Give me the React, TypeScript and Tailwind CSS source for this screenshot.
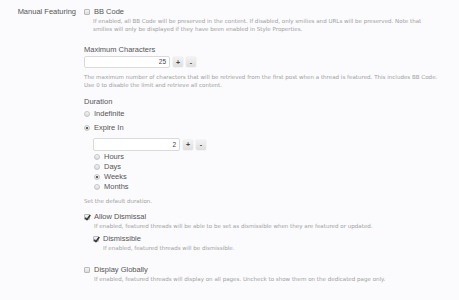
import React from "react";

const Check = ({ on = false }: { on?: boolean }) => (
  <span className="relative inline-block w-[6px] h-[6px] rounded-[1px] border border-[#b9b9b9] bg-gradient-to-b from-[#f4f4f4] to-[#dcdcdc] shrink-0">
    {on && (
      <svg viewBox="0 0 6 6" className="absolute -left-[1px] -top-[1.5px] w-[7px] h-[7px]">
        <path d="M1 3.2 L2.5 4.8 L5.4 0.8" fill="none" stroke="#333" strokeWidth="1.3" />
      </svg>
    )}
  </span>
);

const Radio = ({ on = false }: { on?: boolean }) => (
  <span className="relative inline-flex items-center justify-center w-[6px] h-[6px] rounded-full border border-[#c4c4c4] bg-gradient-to-b from-[#f6f6f6] to-[#dadada] shrink-0">
    {on && <span className="w-[2.5px] h-[2.5px] rounded-full bg-[#333]" />}
  </span>
);

const Btn = ({ children }: { children: React.ReactNode }) => (
  <span className="w-[10px] h-[10px] rounded-[2px] bg-gradient-to-b from-[#f3f3f3] to-[#dedede] shadow-[0_0_1px_#aaa] flex items-center justify-center text-[7px] leading-none font-bold text-[#444]">
    {children}
  </span>
);

const Spin = ({ value, width }: { value: string; width: string }) => (
  <div className="flex items-center gap-[3px] h-full">
    <div className={`${width} h-full bg-white border border-[#dadada] rounded-[2px] flex items-center justify-end pr-[3px] text-[6.5px] text-[#444]`}>
      {value}
    </div>
    <Btn>+</Btn>
    <Btn>-</Btn>
  </div>
);

const Desc = ({ children, className = "" }: { children: React.ReactNode; className?: string }) => (
  <p className={`font-['DejaVu_Sans',sans-serif] text-[5.55px] leading-[7.5px] text-[#a0a0a0] whitespace-nowrap ${className}`}>{children}</p>
);

const Opt = ({ children, className = "" }: { children: React.ReactNode; className?: string }) => (
  <div className={`flex items-center gap-[4px] text-[7.5px] text-[#555] ${className}`}>{children}</div>
);

export default function App() {
  return (
    <div className="w-[459px] h-[300px] bg-[#fbfbfd] overflow-hidden font-['Liberation_Sans',sans-serif]">
      <div className="flex pt-[7px]">
        <div className="w-[76px] h-[9px] flex items-center justify-end text-[7.5px] text-[#555]">Manual Featuring</div>
        <div className="ml-[8px] flex flex-col">
          <Opt className="h-[9px]">
            <Check />
            <span>BB Code</span>
          </Opt>
          <Desc className="ml-[9px] mt-[2px]">
            If enabled, all BB Code will be preserved in the content. If disabled, only smilies and URLs will be preserved. Note that
            <br />
            smilies will only be displayed if they have been enabled in Style Properties.
          </Desc>

          <div className="mt-[13px] h-[8px] leading-[8px] text-[7.5px] text-[#555]">Maximum Characters</div>
          <div className="mt-[2px] h-[12px]">
            <Spin value="25" width="w-[86px]" />
          </div>
          <Desc className="mt-[6px]">
            The maximum number of characters that will be retrieved from the first post when a thread is featured. This includes BB Code.
            <br />
            Use 0 to disable the limit and retrieve all content.
          </Desc>

          <div className="mt-[9px] h-[8px] leading-[8px] text-[7.5px] text-[#555]">Duration</div>
          <Opt className="mt-[4px] h-[8px]">
            <Radio />
            <span>Indefinite</span>
          </Opt>
          <Opt className="mt-[6px] h-[8px]">
            <Radio on />
            <span>Expire In</span>
          </Opt>
          <div className="ml-[9px] mt-[6px] h-[13px]">
            <Spin value="2" width="w-[87px]" />
          </div>
          <div className="ml-[10px] mt-[1px] flex flex-col">
            {[
              ["Hours", false],
              ["Days", false],
              ["Weeks", true],
              ["Months", false],
            ].map(([label, on]) => (
              <Opt key={label as string} className="h-[10px]">
                <Radio on={on as boolean} />
                <span>{label as string}</span>
              </Opt>
            ))}
          </div>
          <Desc className="mt-[5px] leading-[8px]">Set the default duration.</Desc>

          <Opt className="mt-[8px] h-[8px]">
            <Check on />
            <span>Allow Dismissal</span>
          </Opt>
          <Desc className="ml-[10px] mt-[2px]">
            If enabled, featured threads will be able to be set as dismissible when they are featured or updated.
          </Desc>
          <Opt className="ml-[9px] mt-[4.5px] h-[8px]">
            <Check on />
            <span>Dismissible</span>
          </Opt>
          <Desc className="ml-[19px] mt-[2px]">If enabled, featured threads will be dismissible.</Desc>

          <Opt className="mt-[13.5px] h-[8px]">
            <Check />
            <span>Display Globally</span>
          </Opt>
          <Desc className="ml-[10px] mt-[2px]">
            If enabled, featured threads will display on all pages. Uncheck to show them on the dedicated page only.
          </Desc>
        </div>
      </div>
    </div>
  );
}
